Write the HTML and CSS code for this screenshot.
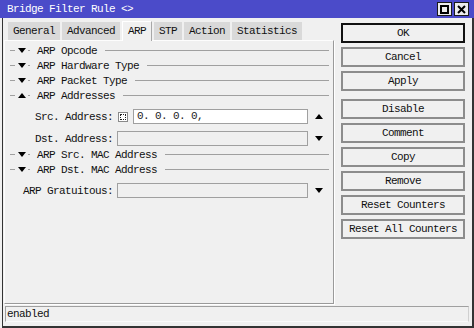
FILE: index.html
```html
<!DOCTYPE html>
<html>
<head>
<meta charset="utf-8">
<link rel="stylesheet" href="styles.css">
</head>
<body>
<div class="window">
  <div class="titlebar">
    <span class="title">Bridge Filter Rule &lt;&gt;</span>
    <div class="tb-btns">
      <span class="tb-btn"><span class="sq"></span></span>
      <span class="tb-btn">
        <svg width="9" height="9" viewBox="0 0 9 9"><path d="M1 1L8 8M8 1L1 8" stroke="#000" stroke-width="2"/></svg>
      </span>
    </div>
  </div>
  <div class="frame">
    <div class="main">
      <div class="left">
        <div class="tabs">
          <span class="tab">General</span>
          <span class="tab">Advanced</span>
          <span class="tab active">ARP</span>
          <span class="tab">STP</span>
          <span class="tab">Action</span>
          <span class="tab">Statistics</span>
        </div>
        <div class="panel">
          <div class="sec"><span class="dash"></span><span class="tri down"></span><span class="dot"></span><span class="sec-label">ARP Opcode</span><span class="rule"></span></div>
          <div class="sec"><span class="dash"></span><span class="tri down"></span><span class="dot"></span><span class="sec-label">ARP Hardware Type</span><span class="rule"></span></div>
          <div class="sec"><span class="dash"></span><span class="tri down"></span><span class="dot"></span><span class="sec-label">ARP Packet Type</span><span class="rule"></span></div>
          <div class="sec"><span class="dash"></span><span class="tri up"></span><span class="dot"></span><span class="sec-label">ARP Addresses</span><span class="rule"></span></div>
          <div class="field f-src">
            <span class="flabel">Src. Address:</span>
            <span class="check"></span>
            <span class="input white short">0. 0. 0. 0,</span>
            <span class="arrow"><span class="tri-s up"></span></span>
          </div>
          <div class="field f-dst">
            <span class="flabel">Dst. Address:</span>
            <span class="input long"></span>
            <span class="arrow"><span class="tri-s down"></span></span>
          </div>
          <div class="sec s-mac"><span class="dash"></span><span class="tri down"></span><span class="dot"></span><span class="sec-label">ARP Src. MAC Address</span><span class="rule"></span></div>
          <div class="sec"><span class="dash"></span><span class="tri down"></span><span class="dot"></span><span class="sec-label">ARP Dst. MAC Address</span><span class="rule"></span></div>
          <div class="field f-grat">
            <span class="flabel">ARP Gratuitous:</span>
            <span class="input long"></span>
            <span class="arrow"><span class="tri-s down"></span></span>
          </div>
        </div>
      </div>
      <div class="buttons">
        <span class="btn default">OK</span>
        <span class="btn">Cancel</span>
        <span class="btn">Apply</span>
        <span class="btn sep">Disable</span>
        <span class="btn">Comment</span>
        <span class="btn">Copy</span>
        <span class="btn">Remove</span>
        <span class="btn">Reset Counters</span>
        <span class="btn">Reset All Counters</span>
      </div>
    </div>
    <div class="status"><span class="status-text">enabled</span></div>
  </div>
</div>
</body>
</html>
```
FILE: styles.css
```css
* { box-sizing: border-box; }
html, body {
  margin: 0;
  padding: 0;
  width: 474px;
  height: 328px;
  overflow: hidden;
  background: #f0f0f0;
}
body {
  font-family: "Liberation Mono", "DejaVu Sans Mono", monospace;
  font-size: 11px;
  letter-spacing: -0.6px;
  color: #111;
}
.window {
  display: flex;
  flex-direction: column;
  height: 328px;
}
.titlebar {
  height: 18px;
  background: #4b4bc9;
  display: flex;
  align-items: center;
  padding: 0 5px 0 7px;
  color: #fff;
}
.title { flex: 1; line-height: 18px; }
.tb-btns { display: flex; gap: 2px; }
.tb-btn {
  width: 15px;
  height: 14px;
  background: #ececec;
  border: 1px solid #1a1a1a;
  display: flex;
  align-items: center;
  justify-content: center;
}
.sq {
  width: 9px;
  height: 9px;
  border: 2px solid #000;
}
.frame {
  flex: 1;
  margin-left: 2px;
  border-left: 1px solid #333;
  border-right: 2px solid #333;
  border-bottom: 2px solid #333;
  display: flex;
  flex-direction: column;
}
.main {
  height: 286px;
  display: flex;
}
.left {
  width: 330px;
  margin-left: 1px;
  display: flex;
  flex-direction: column;
}
.tabs {
  height: 22px;
  display: flex;
  align-items: flex-end;
  gap: 2px;
  padding-left: 4px;
}
.tab {
  height: 18px;
  line-height: 18px;
  padding: 0 5px;
  background: #d9d9d9;
}
.tab.active {
  height: 20px;
  line-height: 19px;
  background: #f0f0f0;
  border-top: 1px solid #fff;
  border-left: 1px solid #fff;
  border-right: 1px solid #a8a8a8;
  padding: 0 5px;
  margin-bottom: -1px;
  position: relative;
  z-index: 1;
}
.panel {
  height: 264px;
  border: 1px solid #9a9a9a;
  border-top-color: #fdfdfd;
  border-left-color: #fdfdfd;
  box-shadow: 1px 1px 0 #fff;
  padding: 2px 4px 0 5px;
  display: flex;
  flex-direction: column;
}
.sec {
  height: 15px;
  display: flex;
  align-items: center;
}
.dash {
  width: 5px;
  height: 1px;
  background: #a0a0a0;
  margin-right: 3px;
}
.tri {
  width: 0;
  height: 0;
  border-left: 4.5px solid transparent;
  border-right: 4.5px solid transparent;
}
.tri.down { border-top: 5px solid #000; }
.tri.up { border-bottom: 5px solid #000; }
.dot {
  width: 2px;
  height: 1px;
  background: #a0a0a0;
  margin-left: 2px;
}
.sec-label {
  margin-left: 7px;
  white-space: nowrap;
}
.rule {
  flex: 1;
  height: 1px;
  background: #a0a0a0;
  margin-left: 8px;
}
.field {
  height: 15px;
  display: flex;
  align-items: center;
}
.f-src { margin-top: 6px; }
.f-dst { margin-top: 7px; }
.s-mac { margin-top: 1px; }
.f-grat { margin-top: 6px; }
.flabel {
  width: 103px;
  text-align: right;
  margin-right: 4px;
  white-space: nowrap;
}
.check {
  width: 10px;
  height: 10px;
  margin-left: 1px;
  margin-right: 5px;
  border: 1px solid #8a8a8a;
  background: #fff;
  position: relative;
}
.check::after {
  content: "";
  position: absolute;
  left: 1px;
  top: 1px;
  right: 1px;
  bottom: 1px;
  border: 1px dotted #222;
}
.input {
  height: 15px;
  line-height: 13px;
  border: 1px solid #a0a0a0;
  background: #f0f0f0;
  padding-left: 3px;
  white-space: nowrap;
}
.input.white { background: #fff; color: #222; }
.input.short { width: 175px; }
.input.long { width: 191px; }
.arrow {
  width: 12px;
  height: 15px;
  margin-left: 5px;
  display: flex;
  align-items: center;
  justify-content: center;
}
.tri-s {
  width: 0;
  height: 0;
  border-left: 4px solid transparent;
  border-right: 4px solid transparent;
}
.tri-s.up { border-bottom: 5px solid #000; }
.tri-s.down { border-top: 5px solid #000; }
.buttons {
  margin-left: 7px;
  width: 124px;
  padding-top: 5px;
  display: flex;
  flex-direction: column;
  gap: 4px;
}
.btn {
  height: 20px;
  border: 2px solid #8c8c8c;
  background: #f0f0f0;
  display: flex;
  align-items: center;
  justify-content: center;
  white-space: nowrap;
}
.btn.default { border-color: #111; }
.btn.sep { margin-top: 4px; }
.status {
  margin: 2px 3px 0 2px;
  height: 16px;
  border: 1px solid #a0a0a0;
  border-bottom-color: #fafafa;
  border-right-color: #d0d0d0;
  display: flex;
  align-items: center;
  padding-left: 1px;
}
```
